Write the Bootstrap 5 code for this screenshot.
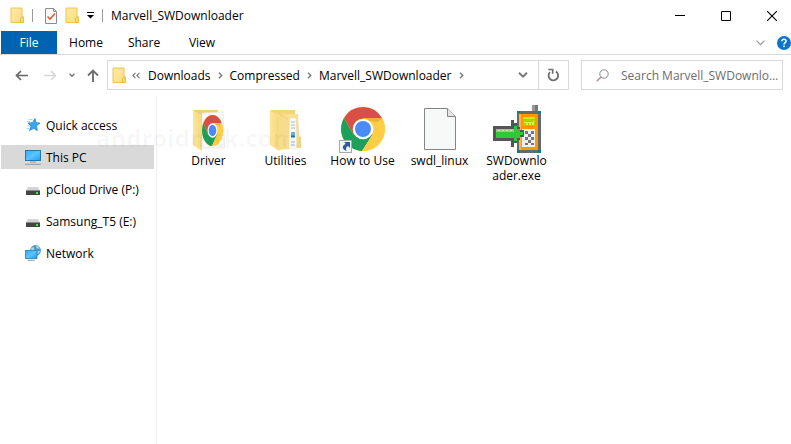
<!DOCTYPE html>
<html lang="en">
<head>
<meta charset="utf-8">
<meta name="viewport" content="width=device-width, initial-scale=1">
<title>Marvell_SWDownloader</title>
<link rel="stylesheet" href="https://cdn.jsdelivr.net/npm/bootstrap@5.3.0/dist/css/bootstrap.min.css">
<style>
body{font-family:"Open Sans","Noto Sans",sans-serif;font-size:12px;line-height:15px;color:#000;background:#fff}
svg{display:block;flex:none}
button{border:0;background:none;padding:0;color:inherit;display:flex;align-items:center;justify-content:center}
a{color:inherit;text-decoration:none}
.titlebar{height:31px;padding-left:10px}
.bar-rule{width:1px;height:13px;background:#9a9a9a}
.win-btn{width:46px;height:31px}
.win-controls{margin-right:-4px}
.tabs-row{height:24px;border-bottom:1px solid #dadbdc;padding-left:1px}
.file-tab{width:56px;height:23px;background:#0063b1;color:#fff}
.menu-tab{width:58px;height:23px}
.address-row{height:41px;padding:5px 8px 6px 15px}
.nav-gap{margin-right:12px}
.path-box{height:30px;border:1px solid #d9d9d9}
.crumbs{gap:7px}
.refresh{width:30px;border-left:1px solid #d9d9d9}
.drop{width:30px}
.search{width:202px;height:30px;border:1px solid #d9d9d9;margin-left:12px;padding-left:14px}
.search input{border:0;outline:0;padding:0;width:100%;min-width:0;background:none;text-overflow:ellipsis;color:#6d6d6d}
.search input::placeholder{color:#6d6d6d;opacity:1}
.side{width:157px;border-right:1px solid #f0f0f0;padding:17px 2px 0 1px;gap:8px}
.side a{height:24px;padding-left:24px;gap:5px}
.side a.current{background:#d9d9d9}
.files{padding:8px 0 0 13px}
.tile{width:77px}
.tile-name{width:66px;overflow-wrap:anywhere;text-align:center}
.watermark{left:96px;top:128px;font-size:24px;line-height:20px;font-weight:700;color:rgba(0,0,0,.035);pointer-events:none}
</style>
<script src="https://cdn.jsdelivr.net/npm/bootstrap@5.3.0/dist/js/bootstrap.bundle.min.js"></script>
</head>
<body class="vh-100 d-flex flex-column overflow-hidden position-relative">
<svg width="0" height="0" class="position-absolute" aria-hidden="true">
  <defs>
    <linearGradient id="fg" x2="1" y2="1"><stop stop-color="#ffeaa6"/><stop offset="1" stop-color="#ffdc7c"/></linearGradient>
    <linearGradient id="blue" x2="1" y2="1"><stop stop-color="#2faeff"/><stop offset=".5" stop-color="#5cc4ff"/><stop offset="1" stop-color="#1c9cf5"/></linearGradient>
    <linearGradient id="leaf" x2="1"><stop stop-color="#ffe596"/><stop offset="1" stop-color="#f4d880"/></linearGradient>
    <symbol id="folder" viewBox="0 0 14 17"><path d="M1 1H12V10.500H13.200V15.500H1Z" fill="url(#fg)" stroke="#ecc54e"/><path d="M10.500 15.500V11.500L13.200 9.500V15.500Z" fill="#ffe28c" stroke="#e8b92e"/></symbol>
    <symbol id="chrome" viewBox="0 0 44 44"><circle cx="22" cy="22" r="22" fill="#ffce44"/><path d="M22 0A22 22 0 0 1 41.200 11.500H22L12.500 27.300L3 11A22 22 0 0 1 22 0Z" fill="#d94f43"/><path d="M3 11A22 22 0 0 0 21 44L31.500 27.500H12.500Z" fill="#1ca05a"/><path d="M31.500 27.500 21 44A22 22 0 0 0 41.200 11.500H22Z" fill="#ffce44"/><path d="M22 12H41.200L36 15L29 14Z" fill="#c99d25" opacity=".5"/><circle cx="22" cy="22" r="10.300" fill="#fff"/><circle cx="22" cy="22" r="8" fill="#4b8bf5"/></symbol>
    <symbol id="drive" viewBox="0 0 14 9"><path d="M2 0H12L14 4H0Z" fill="#d5d5d5"/><rect y="3.500" width="14" height="4.500" fill="#454545"/><path d="M0 3.500H14" stroke="#888" stroke-width=".6"/><rect x="10" y="5" width="2" height="2" fill="#39f03a"/></symbol>
    <symbol id="chev" viewBox="0 0 5 7"><path d="M1 .8 3.700 3.500 1 6.200" fill="none" stroke="#777" stroke-width="1.400"/></symbol>
  </defs>
</svg>

<header class="titlebar d-flex align-items-center">
  <svg width="14" height="17"><use href="#folder"/></svg>
  <span class="bar-rule ms-2"></span>
  <button class="ms-2 ps-1" aria-label="Properties"><svg width="12" height="16" viewBox="0 0 12 16"><path d="M.5.500H8.500L11.500 3.500V15.500H.5Z" fill="#fafafa" stroke="#8c8c8c"/><path d="M8.500.500V3.500H11.500" fill="none" stroke="#8c8c8c"/><path d="M2.500 8.500 5 11 10 5.500" fill="none" stroke="#ef5a28" stroke-width="1.600"/></svg></button>
  <button class="ms-2" aria-label="New folder"><svg width="14" height="17"><use href="#folder"/></svg></button>
  <button class="ms-2" aria-label="Customize Quick Access Toolbar"><svg width="7" height="7" viewBox="0 0 7 7"><path d="M0 0H7V1H0ZM0 3H7L3.500 6.500Z"/></svg></button>
  <span class="bar-rule ms-2"></span>
  <span class="ms-2">Marvell_SWDownloader</span>
  <div class="win-controls d-flex ms-auto">
    <button class="win-btn" aria-label="Minimize"><svg width="10" height="10" viewBox="0 0 10 10"><path d="M0 4.500H10" stroke="#000"/></svg></button>
    <button class="win-btn" aria-label="Maximize"><svg width="10" height="10" viewBox="0 0 10 10"><path d="M.5.500H9.500V9.500H.5Z" fill="none" stroke="#000"/></svg></button>
    <button class="win-btn" aria-label="Close"><svg width="10" height="10" viewBox="0 0 10 10"><path d="M0 0 10 10M10 0 0 10" stroke="#000" stroke-width="1.100"/></svg></button>
  </div>
</header>

<nav class="tabs-row d-flex align-items-center" aria-label="Ribbon">
  <button class="file-tab">File</button>
  <button class="menu-tab">Home</button>
  <button class="menu-tab">Share</button>
  <button class="menu-tab">View</button>
  <button class="ms-auto nav-gap" aria-label="Expand the ribbon"><svg width="9" height="6" viewBox="0 0 9 6"><path d="M.5.700 4.500 4.700 8.500.700" fill="none" stroke="#999" stroke-width="1.200"/></svg></button>
  <button aria-label="Help"><svg width="14" height="14" viewBox="0 0 14 14"><circle cx="7" cy="7" r="7" fill="#0a74cf"/><path d="M4.900 5.200C4.900 2.700 9.100 2.700 9.100 5.200 9.100 6.700 7 6.700 7 8.500" fill="none" stroke="#fff" stroke-width="1.500"/><rect x="6.200" y="9.500" width="1.600" height="1.600" fill="#fff"/></svg></button>
</nav>

<div class="address-row d-flex align-items-center">
  <button class="me-3" aria-label="Back"><svg width="13" height="11" viewBox="0 0 13 11"><path d="M13 5.500H1.500M6 1 1.500 5.500 6 10" fill="none" stroke="#666" stroke-width="1.700"/></svg></button>
  <button class="nav-gap" aria-label="Forward"><svg width="13" height="11" viewBox="0 0 13 11"><path d="M0 5.500H11.500M7 1 11.500 5.500 7 10" fill="none" stroke="#d6d6d6" stroke-width="1.500"/></svg></button>
  <button class="nav-gap" aria-label="Recent locations"><svg width="6" height="5" viewBox="0 0 6 5"><path d="M.5.800 3 3.300 5.500.800" fill="none" stroke="#777" stroke-width="1.500"/></svg></button>
  <button class="me-2" aria-label="Up"><svg width="12" height="13" viewBox="0 0 12 13"><path d="M6 13V1.500M1 6.500 6 1.500 11 6.500" fill="none" stroke="#707070" stroke-width="1.900"/></svg></button>
  <div class="path-box d-flex flex-fill align-items-stretch">
    <div class="crumbs d-flex align-items-center flex-fill ps-1">
      <svg width="12" height="17" overflow="visible"><use href="#folder" width="14" height="17"/></svg>
      <svg width="10" height="7" viewBox="0 0 10 7"><path d="M4.500.800 1.800 3.500 4.500 6.200M8.500.800 5.800 3.500 8.500 6.200" fill="none" stroke="#777" stroke-width="1.100"/></svg>
      <a href="#">Downloads</a><svg width="5" height="7"><use href="#chev"/></svg>
      <a href="#">Compressed</a><svg width="5" height="7"><use href="#chev"/></svg>
      <a href="#">Marvell_SWDownloader</a><svg width="5" height="7"><use href="#chev"/></svg>
    </div>
    <button class="drop" aria-label="Previous locations"><svg width="10" height="6" viewBox="0 0 10 6"><path d="M1 .800 5 4.600 9 .800" fill="none" stroke="#777" stroke-width="1.900"/></svg></button>
    <button class="refresh" aria-label="Refresh"><svg width="13" height="14" viewBox="0 0 11 12"><path d="M7.500 3A4.100 4.100 0 1 1 2.500 3.600" fill="none" stroke="#707070" stroke-width="1.600"/><path d="M1 1.300H4.800V5" fill="none" stroke="#707070" stroke-width="1.400"/></svg></button>
  </div>
  <div class="search d-flex align-items-center">
    <svg class="nav-gap" width="13" height="13" viewBox="0 0 13 13"><circle cx="8" cy="5" r="4.200" fill="none" stroke="#8c8c8c"/><path d="M5 8 .700 12.300" stroke="#b08a92" stroke-width="1.300"/></svg>
    <input type="text" aria-label="Search Marvell_SWDownloader" placeholder="Search Marvell_SWDownloader">
  </div>
</div>

<div class="d-flex flex-fill">
  <nav class="side d-flex flex-column flex-shrink-0" aria-label="Navigation pane">
    <a href="#" class="d-flex align-items-center"><svg width="16" height="14" viewBox="0 0 16 14"><path d="M10 .500 10.900 4.700 15 5.100 11.500 7.800 12.300 12.600 8.700 10.300 4.500 12.600 6 8.200 3.200 5 7.500 4.700Z" fill="#35a9ee" stroke="#2386cf" stroke-width=".8"/><path d="M3.500 1.500H7.500M2 3.500H5M2 8H5M1.500 10.500H4.500" stroke="#8fd0f6" stroke-width=".8"/></svg><span>Quick access</span></a>
    <a href="#" class="d-flex align-items-center current" aria-current="page"><svg width="16" height="15" viewBox="0 0 16 15"><rect x=".5" y=".5" width="15" height="10" fill="url(#blue)" stroke="#2379ae"/><path d="M5 12H11" stroke="#8a9aaa"/><path d="M0 14.300H16" stroke="#8a99ab"/></svg><span>This PC</span></a>
    <a href="#" class="d-flex align-items-center"><svg width="16" height="16" viewBox="0 0 16 16"><use href="#drive" x="1" y="6" width="14" height="9"/></svg><span>pCloud Drive (P:)</span></a>
    <a href="#" class="d-flex align-items-center"><svg width="16" height="16" viewBox="0 0 16 16"><use href="#drive" x="1" y="6" width="14" height="9"/></svg><span>Samsung_T5 (E:)</span></a>
    <a href="#" class="d-flex align-items-center"><svg width="16" height="16" viewBox="0 0 16 16"><circle cx="10.500" cy="5.500" r="5.400" fill="#4a9bc9"/><path d="M6 3.500C8 1 10 3 9 5S6 6 6 3.500M11 .800C14 1 15 3 14 4L11.500 3ZM12 6 15 6 13 9.500Z" fill="#a7d7ec"/><rect x=".5" y="5.500" width="11.500" height="8" fill="url(#blue)" stroke="#2a7fb7" stroke-width=".8"/><path d="M3 15.300H9.500" stroke="#7a98ad"/></svg><span>Network</span></a>
  </nav>
  <main class="files flex-fill">
    <div class="d-flex flex-wrap">
      <a href="#" class="tile d-flex flex-column align-items-center"><svg width="48" height="49" viewBox="0 0 48 49"><path d="M8 6H33V43H17Z" fill="#eccf79"/><path d="M17 9 38 8 39.500 44H16Z" fill="#f8f8f8" stroke="#e2e2e2" stroke-width=".7"/><svg x="17" y="11" width="21" height="31" viewBox="0 0 44 44" preserveAspectRatio="none"><use href="#chrome" width="44" height="44"/></svg><path d="M8 6 17 12V47L8 41Z" fill="url(#leaf)"/></svg><span class="tile-name">Driver</span></a>
      <a href="#" class="tile d-flex flex-column align-items-center"><svg width="48" height="49" viewBox="0 0 48 49"><path d="M8 6H33V10H36L37 32 39 33V44H20Z" fill="#f3d57c"/><path d="M20 10H36V40H20Z" fill="#f9df8f"/><path d="M28 14H34L34.500 45H26Z" fill="#fafafa" stroke="#dedede" stroke-width=".5"/><path d="M29 18H33M29 21H33M29 24H33M29 38H33M29 41H33" stroke="#aab7bf"/><path d="M29 28H33V32H29Z" fill="#65b3d9"/><path d="M29 32.500H33" stroke="#2779b3" stroke-width="2"/><path d="M8 6 26 14V45H17Z" fill="#f2d379"/><path d="M12 8 27 16V45L17 46Z" fill="#f7dc8b"/><path d="M8 6 17 13V47L8 41Z" fill="url(#leaf)"/></svg><span class="tile-name">Utilities</span></a>
      <a href="#" class="tile d-flex flex-column align-items-center"><svg width="48" height="49" viewBox="0 0 48 49"><use href="#chrome" x="2" y="3" width="44" height="44"/><rect x=".5" y="36.500" width="12" height="12" fill="#f5f5f5" stroke="#aaa"/><path d="M5 38H11V44L9 42C7 43 6.500 44.500 7.500 47 3 45 2.500 42 6.700 39.700Z" fill="#2b5c9d"/></svg><span class="tile-name">How to Use</span></a>
      <a href="#" class="tile d-flex flex-column align-items-center"><svg width="48" height="49" viewBox="0 0 48 49"><path d="M8.500 4.500H31.500L39.500 12.500V45.500H8.500Z" fill="#f7f8f8" stroke="#858585"/><path d="M31.500 4.500V12.500H39.500" fill="#e5e5e5" stroke="#858585"/></svg><span class="tile-name">swdl_linux</span></a>
      <a href="#" class="tile d-flex flex-column align-items-center"><svg width="48" height="49" viewBox="0 0 48 49" shape-rendering="crispEdges"><path d="M39 1H45V7H39Z" fill="#777"/><path d="M39 1H42V7H39Z" fill="#999"/><path d="M24 7H48V49H24Z" fill="#65696b"/><path d="M26 10H45V46H26Z" fill="#ff9800"/><path d="M24 7H27V9H24ZM45 7H48V9H45ZM24 46H27V49H24ZM45 46H48V49H45Z" fill="#087f84"/><path d="M26 10H28V46H26Z" fill="#ffb34c"/><path d="M30 13H42V22H30Z" fill="#a5d600"/><path d="M30 13H42V15H30Z" fill="#c2ee27"/><path d="M31 18H33V20H34V18H36V20H37V18H39V20H40V17" fill="none" stroke="#d5f34a"/><path d="M29 25H42V43H29Z" fill="#efefef"/><path d="M32 27H35V30H32ZM38 27H41V30H38ZM35 30H38V33H35ZM32 33H35V36H32ZM38 33H41V36H38ZM35 36H38V39H35ZM32 39H35V41H32ZM38 39H41V41H38Z" fill="#777"/><path d="M0 22H18V16H21V19H24V23H27V26H31V33H27V36H24V39H21V43H18V37H0Z" fill="#555"/><path d="M3 25H21V22H24V25H27V28H30V31H27V34H24V37H21V34H3Z" fill="#32c832"/><path d="M3 25H21V28H3Z" fill="#8bd963"/><path d="M5 26H7M9 26H11M13 26H15M17 26H19" stroke="#c1e5a0"/></svg><span class="tile-name">SWDownloader.exe</span></a>
    </div>
  </main>
</div>
<div class="watermark position-absolute" aria-hidden="true">androidmtk.com</div>
</body>
</html>
